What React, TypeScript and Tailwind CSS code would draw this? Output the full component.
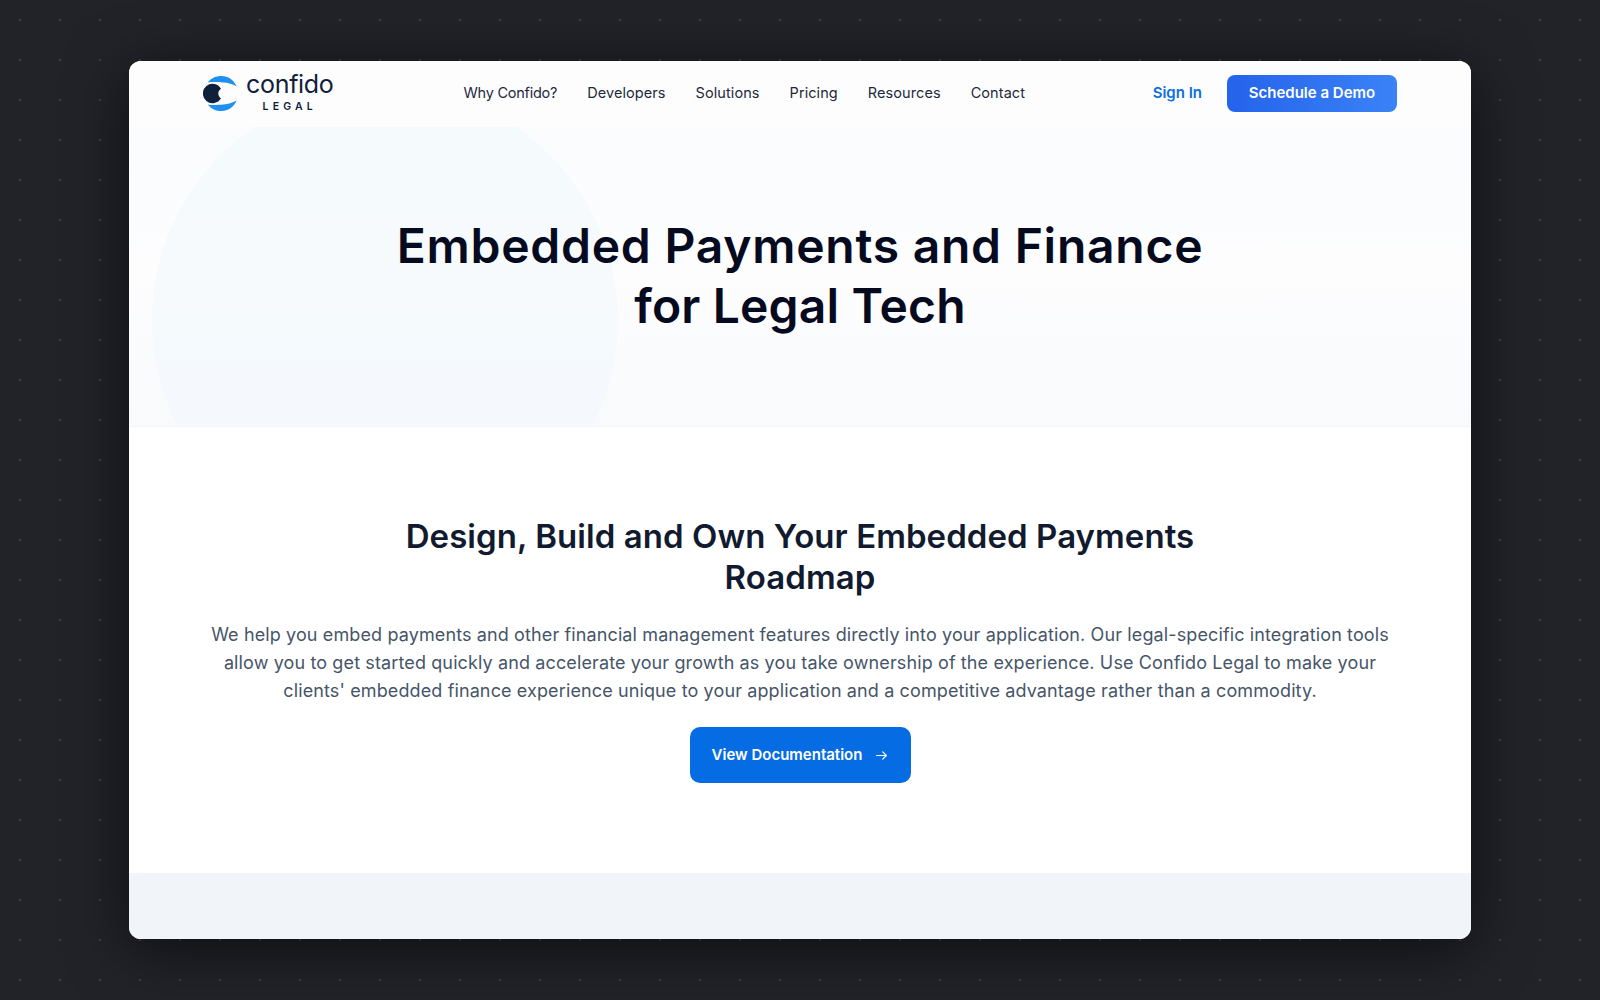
const nav = ["Why Confido?", "Developers", "Solutions", "Pricing", "Resources", "Contact"];

function Logo() {
  return (
    <div className="flex items-center gap-[9px] w-[130px]">
      <svg viewBox="0 0 34 35.4" className="w-[34px] h-[35px] shrink-0">
        <path d="M4.7 6.6 C8 2 13 0 18.7 0 C25 0 31 4 33.8 10.6 C29.5 8.2 25.5 6.8 20.5 6.6 C14 6.1 9 5.7 4.7 6.6 Z" fill="#1f8ff0" />
        <path d="M4.7 28.8 C8 33.4 13 35.4 18.7 35.4 C25 35.4 31 31.4 33.8 24.8 C29.5 27.2 25.5 28.6 20.5 28.8 C14 29.3 9 29.7 4.7 28.8 Z" fill="#1f8ff0" />
        <path d="M18 12.8 A9.8 9.8 0 1 0 18 22.6 A5.8 5.8 0 0 1 18 12.8 Z" fill="#10203a" />
      </svg>
      <div className="flex flex-col items-center">
        <span className="text-[25px] leading-[24px] text-[#10203a] tracking-[-0.3px]">confido</span>
        <span className="text-[10.5px] leading-[14px] font-semibold tracking-[0.4em] text-[#10203a] mt-[4px]">LEGAL</span>
      </div>
    </div>
  );
}

export default function App() {
  return (
    <div className="relative min-h-[1000px] bg-[#212329] bg-[radial-gradient(circle,#3d3f46_1px,transparent_1.5px)] bg-[length:40px_40px] flex justify-center pt-[61px] font-['Inter',sans-serif]">
      <div className="w-[1342px] h-[878px] rounded-[12px] overflow-hidden bg-white flex flex-col shadow-[0_10px_60px_rgba(0,0,0,0.6)]">
        <header className="h-[66px] shrink-0 bg-[#fdfdfe] px-[74px] pb-[2px] flex items-center justify-between">
          <Logo />
          <nav className="ml-[3px] flex items-center gap-[30px] text-[14.5px] text-[#1e293b]">
            {nav.map((item, i) => (
              <a key={item} href="#" className={i === 0 ? "tracking-[-0.25px]" : "tracking-[0.08px]"}>{item}</a>
            ))}
          </nav>
          <div className="flex items-center gap-[25px]">
            <a href="#" className="text-[15px] font-semibold text-[#0b6fe0]">Sign In</a>
            <a href="#" className="w-[170px] h-[37px] flex items-center justify-center rounded-[8px] bg-gradient-to-r from-[#2563eb] to-[#3b82f6] text-white text-[15px] font-semibold">
              Schedule a Demo
            </a>
          </div>
        </header>

        <section className="relative h-[300px] shrink-0 overflow-hidden bg-gradient-to-b from-[#fafcfd] via-[#fdfdfe] to-[#f8fafc] border-b border-[#f1f5f9] flex items-center justify-center">
          <div className="absolute left-[23px] top-[-40px] w-[466px] h-[466px] rounded-full bg-[#f4f9fd] opacity-80" />
          <h1 className="relative text-[48px] leading-[60px] font-semibold text-[#050a1f] text-center mt-[-1px]">
            <span className="tracking-[0.75px]">Embedded Payments and Finance</span>
            <br />
            <span className="tracking-[0.15px]">for Legal Tech</span>
          </h1>
        </section>

        <section className="flex-1 flex flex-col items-center pt-[89px]">
          <h2 className="text-[33px] leading-[41px] tracking-[0.06px] font-semibold text-[#111a2e] text-center">
            Design, Build and Own Your Embedded Payments
            <br />
            Roadmap
          </h2>
          <p className="mt-[23px] w-[1200px] text-[18px] leading-[28px] tracking-[0.12px] text-[#475569] text-center">
            We help you embed payments and other financial management features directly into your application. Our legal-specific integration tools allow you to get started quickly and accelerate your growth as you take ownership of the experience. Use Confido Legal to make your clients' embedded finance experience unique to your application and a competitive advantage rather than a commodity.
          </p>
          <a href="#" className="mt-[22px] w-[221px] h-[56px] rounded-[10px] bg-[#066ce4] text-white text-[15px] font-semibold flex items-center justify-center gap-[13px]">
            View Documentation
            <svg viewBox="0 0 16 16" className="w-[13px] h-[13px]" fill="none" stroke="currentColor" strokeWidth="1.5" strokeLinecap="round" strokeLinejoin="round">
              <path d="M2 8h12M9.5 3.5 14 8l-4.5 4.5" />
            </svg>
          </a>
        </section>

        <div className="h-[66px] shrink-0 bg-[#f1f5f9]" />
      </div>
    </div>
  );
}
